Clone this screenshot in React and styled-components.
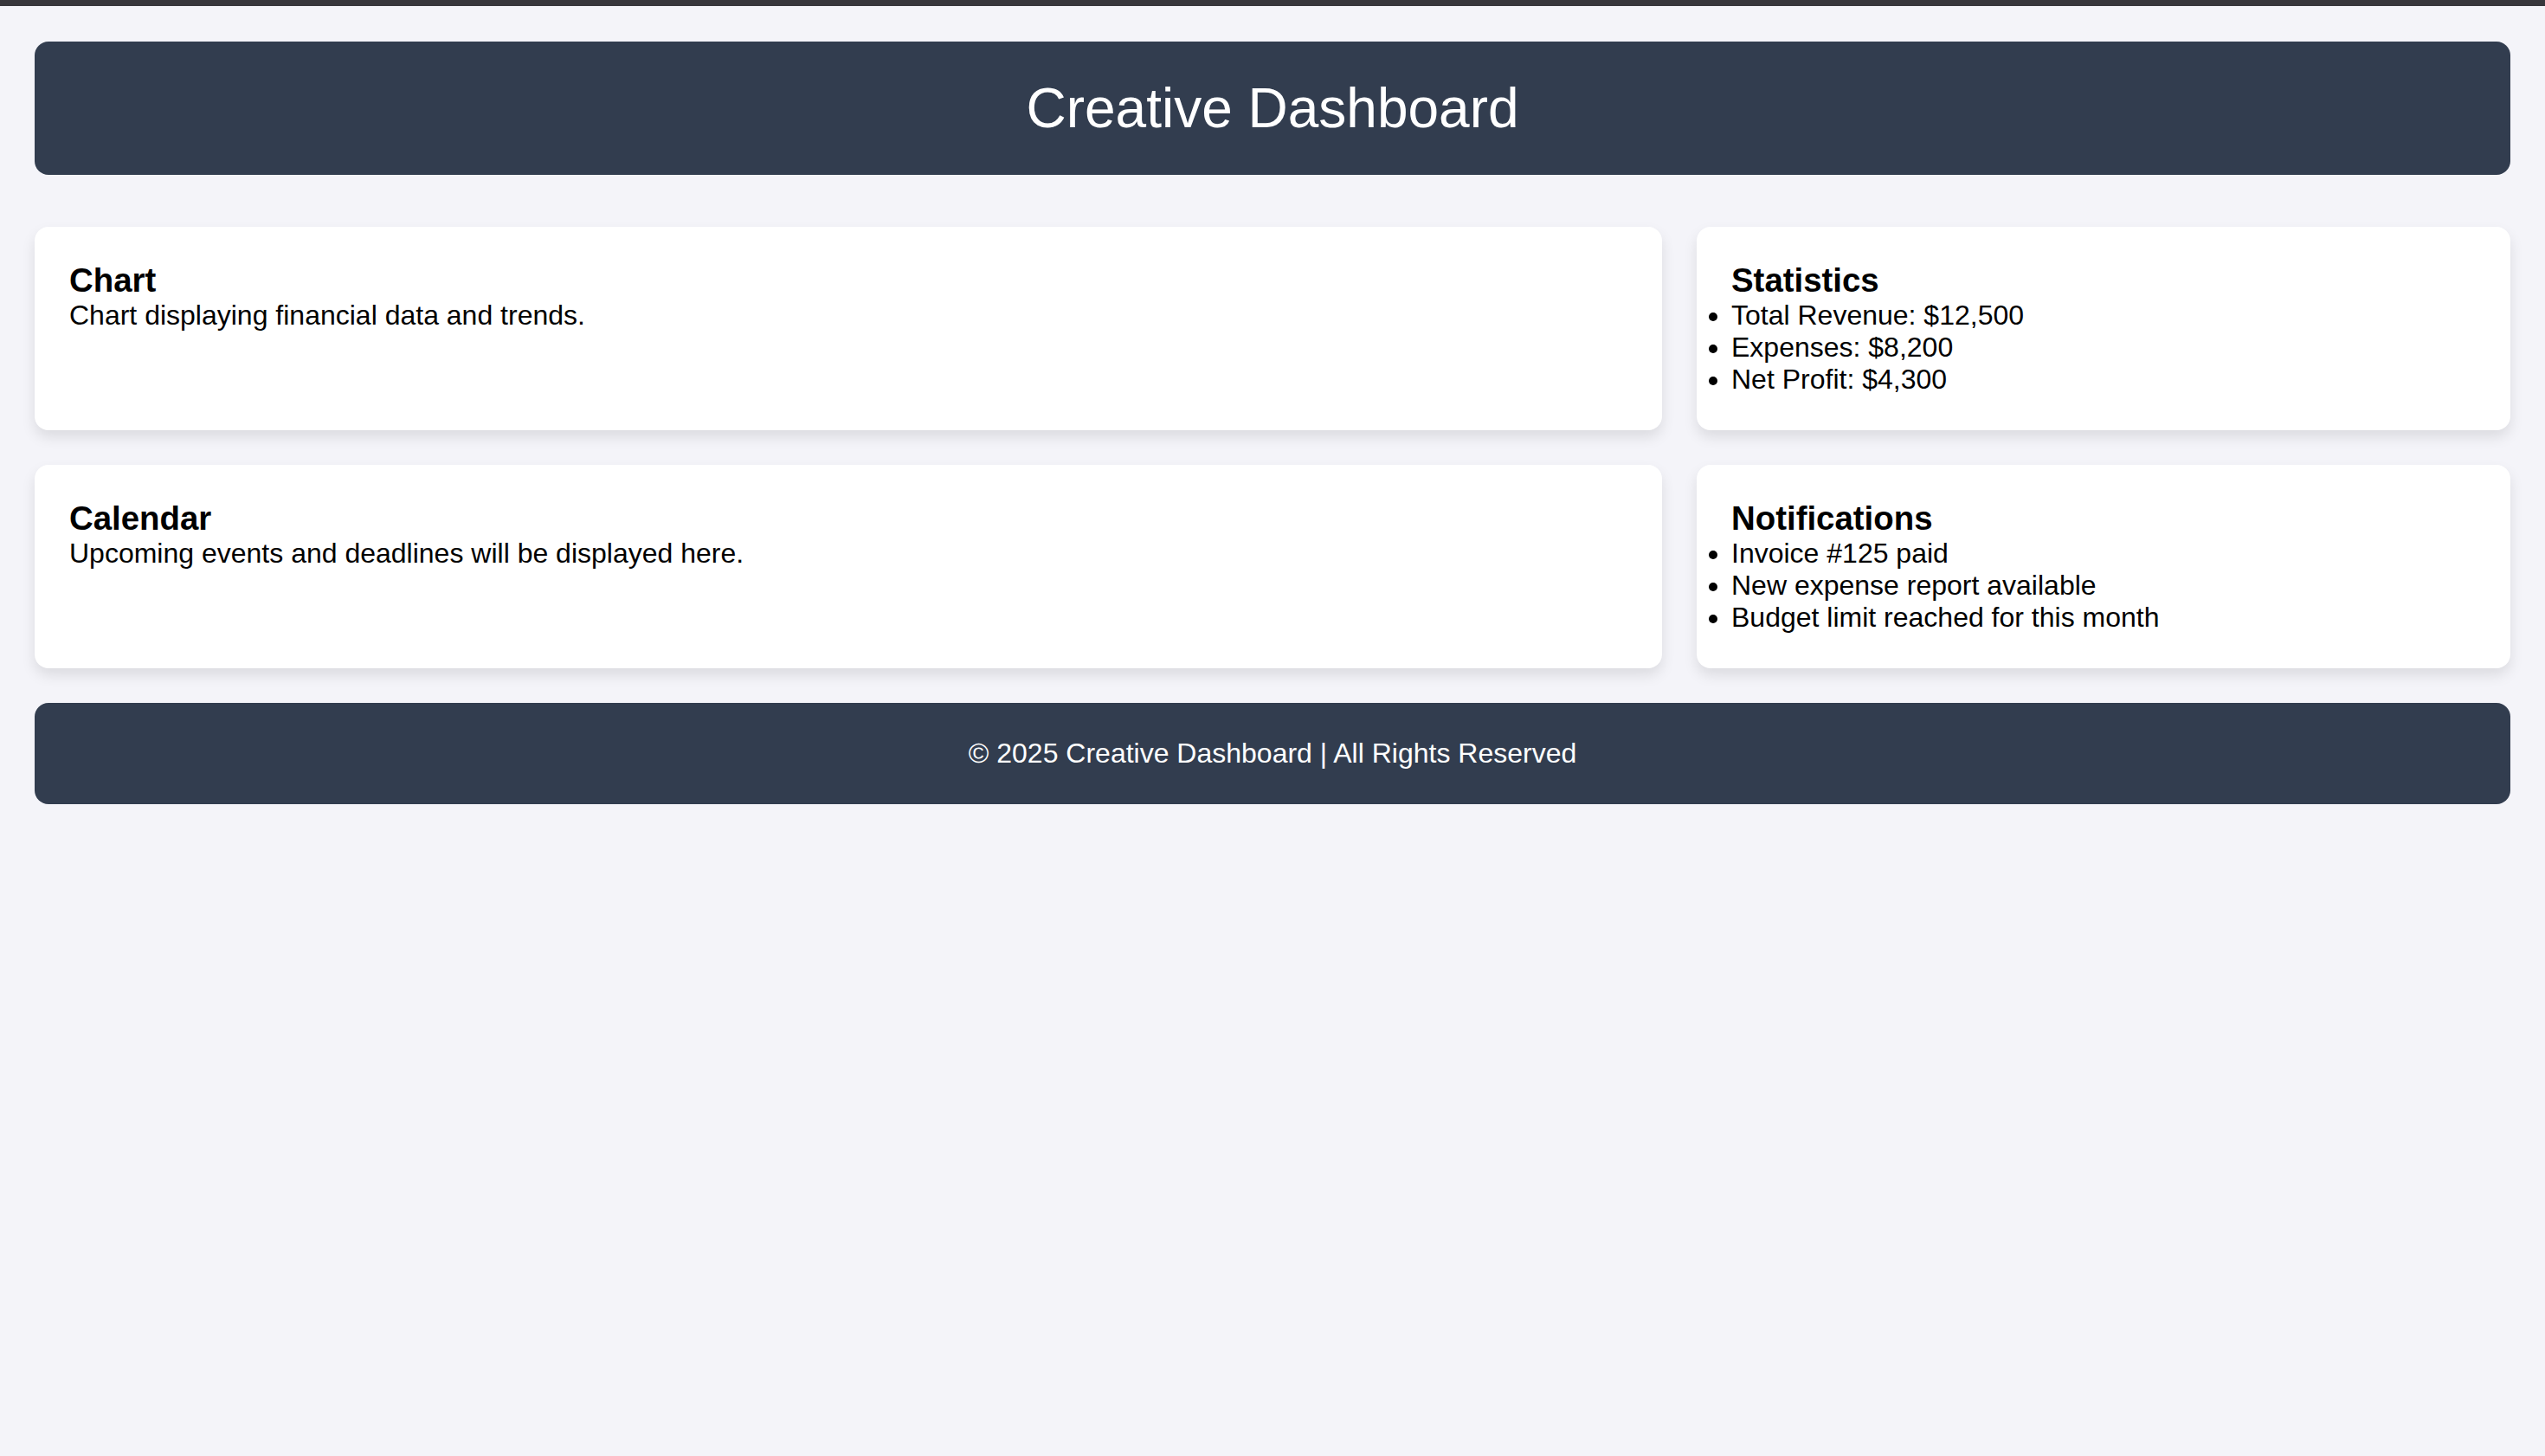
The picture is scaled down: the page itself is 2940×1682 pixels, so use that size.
import React from 'react'
import styled, { createGlobalStyle } from 'styled-components'

const GlobalStyle = createGlobalStyle`
  html, body {
    margin: 0;
    background: #f4f4f9;
  }
  body {
    border-top: 7px solid #38373c;
    padding: 41px 40px 40px;
    font-family: "Liberation Sans", Arial, Helvetica, sans-serif;
    font-size: 32px;
    color: #000;
  }
`

const Header = styled.header`
  background: #323d4f;
  color: #fff;
  padding: 40px;
  border-radius: 16px;
  text-align: center;
  margin-bottom: 60px;
`

const Title = styled.h1`
  margin: 0;
  font-size: 64px;
  font-weight: normal;
`

const Grid = styled.main`
  display: grid;
  grid-template-columns: 2fr 1fr;
  gap: 40px;
`

const Card = styled.section`
  background: #fff;
  padding: 40px;
  border-radius: 16px;
  box-shadow: 0 8px 16px rgba(0, 0, 0, 0.1);
`

const CardTitle = styled.h2`
  margin: 0;
  font-size: 38.4px;
  font-weight: bold;
`

const Text = styled.p`
  margin: 0;
`

const List = styled.ul`
  margin: 0;
  padding: 0;
`

const Footer = styled.footer`
  margin-top: 40px;
  background: #323d4f;
  color: #fff;
  padding: 40px;
  border-radius: 16px;
  text-align: center;
`

const stats = ['Total Revenue: $12,500', 'Expenses: $8,200', 'Net Profit: $4,300']
const notes = ['Invoice #125 paid', 'New expense report available', 'Budget limit reached for this month']

const App = () => {
  return (
    <>
      <GlobalStyle />
      <Header>
        <Title>Creative Dashboard</Title>
      </Header>
      <Grid>
        <Card>
          <CardTitle>Chart</CardTitle>
          <Text>Chart displaying financial data and trends.</Text>
        </Card>
        <Card>
          <CardTitle>Statistics</CardTitle>
          <List>
            {stats.map((s) => (
              <li key={s}>{s}</li>
            ))}
          </List>
        </Card>
        <Card>
          <CardTitle>Calendar</CardTitle>
          <Text>Upcoming events and deadlines will be displayed here.</Text>
        </Card>
        <Card>
          <CardTitle>Notifications</CardTitle>
          <List>
            {notes.map((n) => (
              <li key={n}>{n}</li>
            ))}
          </List>
        </Card>
      </Grid>
      <Footer>© 2025 Creative Dashboard | All Rights Reserved</Footer>
    </>
  )
}

export default App
